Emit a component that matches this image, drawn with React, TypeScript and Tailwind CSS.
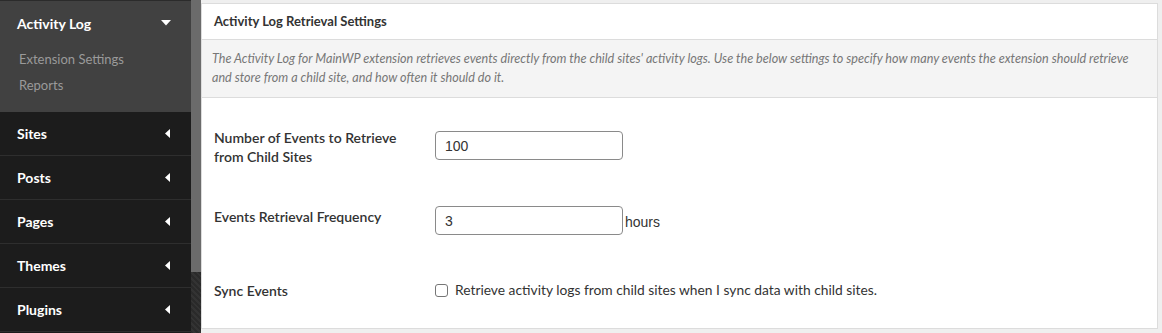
import React from 'react';

const lato = { fontFamily: 'Lato, "Open Sans", sans-serif' };
const arial = { fontFamily: '"Liberation Sans", Arial, sans-serif' };

const menuItems = ['Sites', 'Posts', 'Pages', 'Themes', 'Plugins'];

const CaretLeft = () => (
    <svg width="6" height="9" viewBox="0 0 6 9" className="fill-white">
        <path d="M5 0 L5 9 L0 4.5 Z" />
    </svg>
);

const CaretDown = () => (
    <svg width="10" height="6" viewBox="0 0 10 6" className="fill-white">
        <path d="M0 0 L10 0 L5 5.5 Z" />
    </svg>
);

const Sidebar: React.FC = () => (
    <div className="w-[191px] h-[333px] bg-[#1c1c1c] flex flex-col border-t border-[#2b2b2b]" style={lato}>
        <div className="bg-[#414141] h-[111px] flex flex-col">
            <div className="h-[44px] flex items-center justify-between pl-[17px] pr-[20px]">
                <span className="text-white font-bold text-[14px]">Activity Log</span>
                <CaretDown />
            </div>
            <div className="pl-[19px] text-[13px] text-[#9a9a9a] leading-[26px] pt-[1px]">
                <div>Extension Settings</div>
                <div>Reports</div>
            </div>
        </div>
        {menuItems.map((item) => (
            <div
                key={item}
                className="h-[44px] flex items-center justify-between pl-[17px] pr-[20px] border-b border-[#2e2e2e] shrink-0"
            >
                <span className="text-white font-bold text-[14px]">{item}</span>
                <CaretLeft />
            </div>
        ))}
    </div>
);

const Scrollbar: React.FC = () => (
    <div className="w-[10px] h-[333px] flex flex-col bg-[repeating-linear-gradient(45deg,#2a2a2a_0px,#2a2a2a_2px,#333333_2px,#333333_4px)]">
        <div className="h-[272px] bg-[#6b6b6b]" />
    </div>
);

export default function App() {
    return (
        <div className="flex w-[1162px] h-[333px] overflow-hidden bg-[#efefef]">
            <Sidebar />
            <Scrollbar />
            <div className="flex-1 pt-[3px] pr-[4px] pb-[4px]" style={lato}>
                <div className="bg-white border border-[#dcdcdc] h-[326px] flex flex-col">
                    <div className="h-[36px] flex items-center px-[12px] border-b border-[#dcdcdc]">
                        <span className="text-[13px] font-bold text-[#333]">Activity Log Retrieval Settings</span>
                    </div>
                    <div className="bg-[#f4f4f4] border-b border-[#dcdcdc] px-[10px] py-[9px] h-[58px]">
                        <p className="text-[12.6px] italic text-[#777] leading-[19px]">
                            The Activity Log for MainWP extension retrieves events directly from the child sites' activity logs. Use the below settings to specify how many events the extension should retrieve and store from a child site, and how often it should do it.
                        </p>
                    </div>
                    <div className="px-[12px] text-[14px] text-[#333]">
                        <div className="flex items-start mt-[31px]">
                            <label className="w-[221px] font-semibold leading-[19px] -mt-[1px]">
                                Number of Events to Retrieve
                                <br />
                                from Child Sites
                            </label>
                            <input
                                type="text"
                                defaultValue="100"
                                className="mt-[2px] w-[188px] h-[29px] border border-[#8a8a8a] rounded-[4px] px-[9px] text-[14px] text-[#333] outline-none"
                                style={arial}
                            />
                        </div>
                        <div className="flex items-start mt-[40px]">
                            <label className="w-[221px] font-semibold leading-[19px] mt-[1px]">Events Retrieval Frequency</label>
                            <input
                                type="text"
                                defaultValue="3"
                                className="w-[188px] h-[29px] border border-[#8a8a8a] rounded-[4px] px-[9px] text-[14px] text-[#333] outline-none"
                                style={arial}
                            />
                            <span className="ml-[2px] mt-[6px] text-[14px] text-[#333]" style={arial}>
                                hours
                            </span>
                        </div>
                        <div className="flex items-center mt-[45px]">
                            <label className="w-[221px] font-semibold leading-[19px]">Sync Events</label>
                            <label className="flex items-center gap-[7px]">
                                <span className="w-[13px] h-[13px] border border-[#767676] rounded-[3px] bg-white" />
                                <span className="text-[13.8px]">Retrieve activity logs from child sites when I sync data with child sites.</span>
                            </label>
                        </div>
                    </div>
                </div>
            </div>
        </div>
    );
}
